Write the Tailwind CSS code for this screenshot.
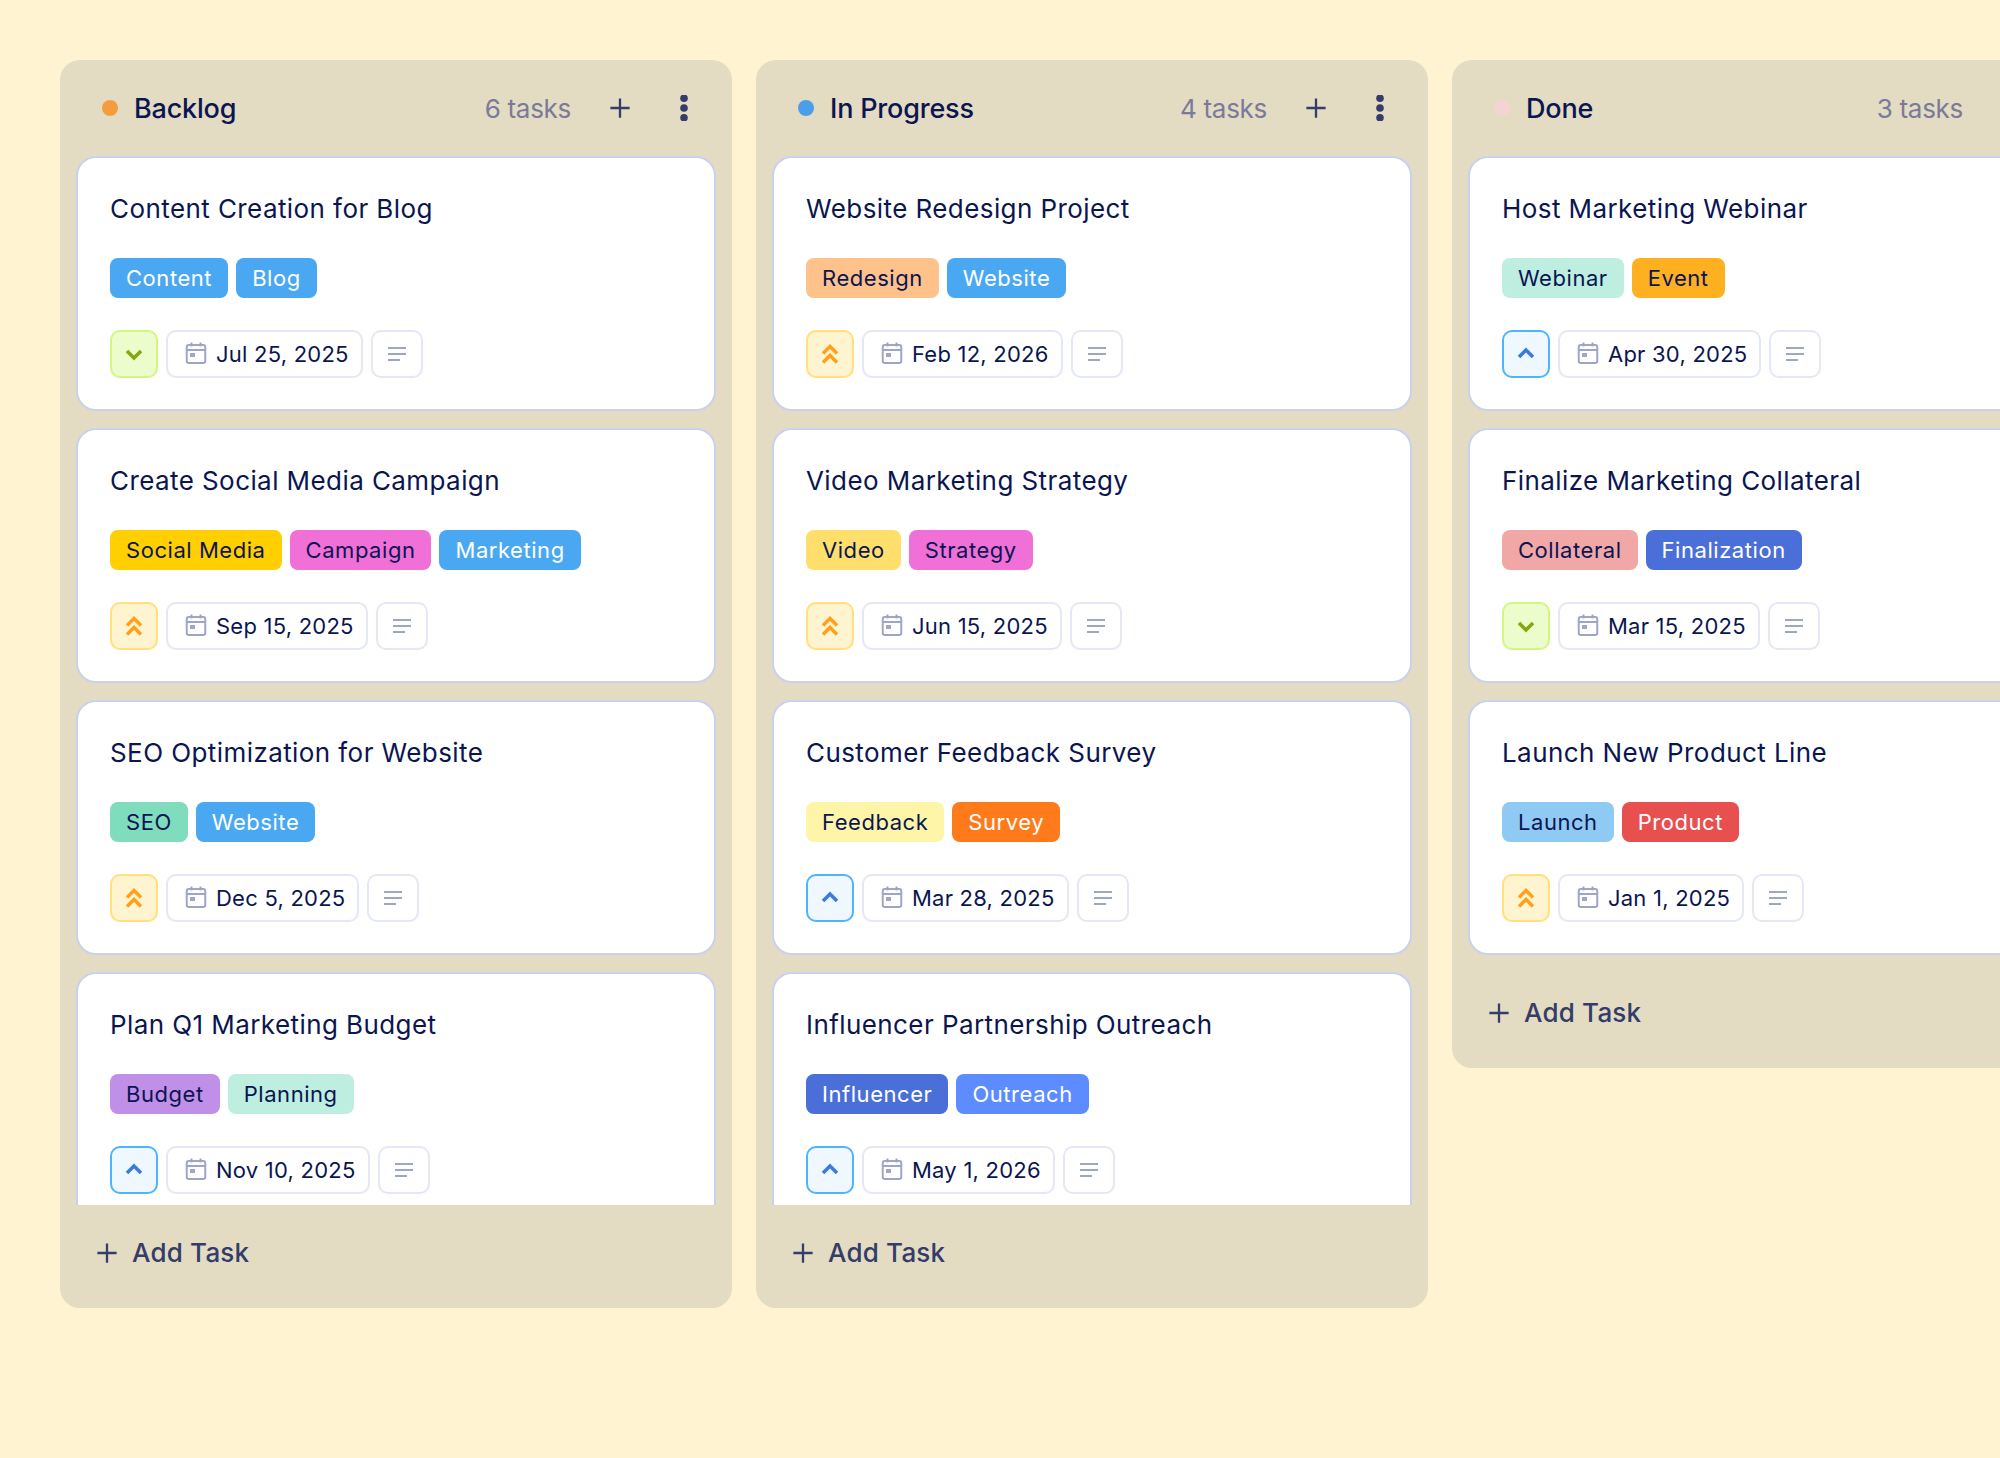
<!DOCTYPE html>
<html lang="en">
<head>
<meta charset="utf-8">
<title>Kanban</title>
<script src="https://cdn.jsdelivr.net/npm/@tailwindcss/browser@4"></script>
</head>
<body class="bg-[#fff3d1] font-['Inter','Noto_Sans',sans-serif] text-[#0a1551] w-[2000px] h-[1458px] overflow-hidden">
<svg class="hidden">
<symbol id="cal" viewBox="0 0 24 24"><rect x="2.75" y="3" width="18.500" height="18" rx="2" fill="none" stroke="currentColor" stroke-width="2"/><path d="M3 8h18M7.500 .5v4M16.500 .5v4" fill="none" stroke="currentColor" stroke-width="2"/><rect x="6" y="11" width="5" height="4" fill="currentColor"/></symbol>
<symbol id="note" viewBox="0 0 24 24"><path d="M3 6h18M3 12h18M3 18h12" fill="none" stroke="currentColor" stroke-width="2"/></symbol>
<symbol id="low" viewBox="0 0 24 24"><path d="M5 9l7 7 7-7" fill="none" stroke="currentColor" stroke-width="3.500"/></symbol>
<symbol id="med" viewBox="0 0 24 24"><path d="M5 15l7-7 7 7" fill="none" stroke="currentColor" stroke-width="3.500"/></symbol>
<symbol id="high" viewBox="0 0 24 24"><path d="M5 11.500l7-7 7 7M5 20.500l7-7 7 7" fill="none" stroke="currentColor" stroke-width="3.500"/></symbol>
<symbol id="plus" viewBox="0 0 24 24"><path d="M12 1.500v21M1.500 12h21" fill="none" stroke="currentColor" stroke-width="2.500"/></symbol>
<symbol id="dots" viewBox="0 0 24 24"><circle cx="12" cy="3" r="3.500" fill="currentColor"/><circle cx="12" cy="12" r="3.500" fill="currentColor"/><circle cx="12" cy="21" r="3.500" fill="currentColor"/></symbol>
</svg>
<main class="flex items-start gap-6 pl-[60px] pt-[60px]">

<section class="w-[672px] h-[1248px] shrink-0 flex flex-col bg-[#e3dbc2] rounded-[20px]">
  <header class="h-[96px] shrink-0 flex items-center pl-[42px] pr-[28px]">
    <span class="w-4 h-4 rounded-full bg-[#f49d3f]"></span>
    <h2 class="ml-4 pt-0.5 text-[27px] font-[550] tracking-[-0.2px]">Backlog</h2>
    <span class="ml-auto text-[26px] text-[#7a7a9a] tracking-[-0.3px]">6 tasks</span>
    <button class="ml-[29px] w-10 h-10 flex items-center justify-center text-[#343c6a]"><svg class="w-[22px] h-[22px]"><use href="#plus"/></svg></button>
    <button class="ml-6 w-10 h-10 flex items-center justify-center text-[#343c6a]"><svg class="w-[26px] h-[26px]"><use href="#dots"/></svg></button>
  </header>
  <div class="flex-1 overflow-hidden px-4 flex flex-col gap-[17px]">
    <article class="h-[255px] shrink-0 bg-white border-2 border-[#c9d1ee] rounded-[20px] px-8 pt-[31px]">
      <h3 class="h-10 leading-10 text-[26px] tracking-[0.42px] font-normal">Content Creation for Blog</h3>
      <div class="mt-[29px] flex gap-2 text-[22px] tracking-[0.55px]"><span class="h-10 leading-10 px-4 rounded-lg bg-[#4aa8f2] text-white">Content</span><span class="h-10 leading-10 px-4 rounded-lg bg-[#4aa8f2] text-white">Blog</span></div>
      <div class="mt-8 flex gap-2 text-[22px] tracking-[0.23px]">
        <span class="w-12 h-12 flex items-center justify-center rounded-[10px] border-2 border-[#d3f67f] bg-[#ecfccb] text-[#84a60e]"><svg class="w-6 h-6"><use href="#low"/></svg></span>
        <span class="h-12 flex items-center gap-2 pl-4 pr-3 rounded-[10px] border-2 border-[#e3e7f6]"><svg class="w-6 h-6 text-[#9da5cb]"><use href="#cal"/></svg>Jul 25, 2025</span>
        <span class="w-[52px] h-12 flex items-center justify-center rounded-[10px] border-2 border-[#e3e7f6] text-[#9da5cb]"><svg class="w-6 h-6"><use href="#note"/></svg></span>
      </div>
    </article>
    <article class="h-[255px] shrink-0 bg-white border-2 border-[#c9d1ee] rounded-[20px] px-8 pt-[31px]">
      <h3 class="h-10 leading-10 text-[26px] tracking-[0.42px] font-normal">Create Social Media Campaign</h3>
      <div class="mt-[29px] flex gap-2 text-[22px] tracking-[0.55px]"><span class="h-10 leading-10 px-4 rounded-lg bg-[#ffcf00]">Social Media</span><span class="h-10 leading-10 px-4 rounded-lg bg-[#f170d8]">Campaign</span><span class="h-10 leading-10 px-4 rounded-lg bg-[#4aa8f2] text-white">Marketing</span></div>
      <div class="mt-8 flex gap-2 text-[22px] tracking-[0.23px]">
        <span class="w-12 h-12 flex items-center justify-center rounded-[10px] border-2 border-[#ffe07a] bg-[#fff4d0] text-[#ff9f1a]"><svg class="w-6 h-6"><use href="#high"/></svg></span>
        <span class="h-12 flex items-center gap-2 pl-4 pr-3 rounded-[10px] border-2 border-[#e3e7f6]"><svg class="w-6 h-6 text-[#9da5cb]"><use href="#cal"/></svg>Sep 15, 2025</span>
        <span class="w-[52px] h-12 flex items-center justify-center rounded-[10px] border-2 border-[#e3e7f6] text-[#9da5cb]"><svg class="w-6 h-6"><use href="#note"/></svg></span>
      </div>
    </article>
    <article class="h-[255px] shrink-0 bg-white border-2 border-[#c9d1ee] rounded-[20px] px-8 pt-[31px]">
      <h3 class="h-10 leading-10 text-[26px] tracking-[0.42px] font-normal">SEO Optimization for Website</h3>
      <div class="mt-[29px] flex gap-2 text-[22px] tracking-[0.55px]"><span class="h-10 leading-10 px-4 rounded-lg bg-[#7fdcbc]">SEO</span><span class="h-10 leading-10 px-4 rounded-lg bg-[#4aa8f2] text-white">Website</span></div>
      <div class="mt-8 flex gap-2 text-[22px] tracking-[0.23px]">
        <span class="w-12 h-12 flex items-center justify-center rounded-[10px] border-2 border-[#ffe07a] bg-[#fff4d0] text-[#ff9f1a]"><svg class="w-6 h-6"><use href="#high"/></svg></span>
        <span class="h-12 flex items-center gap-2 pl-4 pr-3 rounded-[10px] border-2 border-[#e3e7f6]"><svg class="w-6 h-6 text-[#9da5cb]"><use href="#cal"/></svg>Dec 5, 2025</span>
        <span class="w-[52px] h-12 flex items-center justify-center rounded-[10px] border-2 border-[#e3e7f6] text-[#9da5cb]"><svg class="w-6 h-6"><use href="#note"/></svg></span>
      </div>
    </article>
    <article class="h-[255px] shrink-0 bg-white border-2 border-[#c9d1ee] rounded-[20px] px-8 pt-[31px]">
      <h3 class="h-10 leading-10 text-[26px] tracking-[0.42px] font-normal">Plan Q1 Marketing Budget</h3>
      <div class="mt-[29px] flex gap-2 text-[22px] tracking-[0.55px]"><span class="h-10 leading-10 px-4 rounded-lg bg-[#c08fe8]">Budget</span><span class="h-10 leading-10 px-4 rounded-lg bg-[#bdeee0]">Planning</span></div>
      <div class="mt-8 flex gap-2 text-[22px] tracking-[0.23px]">
        <span class="w-12 h-12 flex items-center justify-center rounded-[10px] border-2 border-[#4db5ff] bg-[#eff7ff] text-[#3b7be0]"><svg class="w-6 h-6"><use href="#med"/></svg></span>
        <span class="h-12 flex items-center gap-2 pl-4 pr-3 rounded-[10px] border-2 border-[#e3e7f6]"><svg class="w-6 h-6 text-[#9da5cb]"><use href="#cal"/></svg>Nov 10, 2025</span>
        <span class="w-[52px] h-12 flex items-center justify-center rounded-[10px] border-2 border-[#e3e7f6] text-[#9da5cb]"><svg class="w-6 h-6"><use href="#note"/></svg></span>
      </div>
    </article>
  </div>
  <footer class="h-[103px] shrink-0 flex items-center pb-2 pl-[36px] gap-[14px] text-[26px] font-medium text-[#343c6a] tracking-[0.2px]"><svg class="w-[22px] h-[22px]"><use href="#plus"/></svg>Add Task</footer>
</section>

<section class="w-[672px] h-[1248px] shrink-0 flex flex-col bg-[#e3dbc2] rounded-[20px]">
  <header class="h-[96px] shrink-0 flex items-center pl-[42px] pr-[28px]">
    <span class="w-4 h-4 rounded-full bg-[#4a9fe8]"></span>
    <h2 class="ml-4 pt-0.5 text-[27px] font-[550] tracking-[-0.2px]">In Progress</h2>
    <span class="ml-auto text-[26px] text-[#7a7a9a] tracking-[-0.3px]">4 tasks</span>
    <button class="ml-[29px] w-10 h-10 flex items-center justify-center text-[#343c6a]"><svg class="w-[22px] h-[22px]"><use href="#plus"/></svg></button>
    <button class="ml-6 w-10 h-10 flex items-center justify-center text-[#343c6a]"><svg class="w-[26px] h-[26px]"><use href="#dots"/></svg></button>
  </header>
  <div class="flex-1 overflow-hidden px-4 flex flex-col gap-[17px]">
    <article class="h-[255px] shrink-0 bg-white border-2 border-[#c9d1ee] rounded-[20px] px-8 pt-[31px]">
      <h3 class="h-10 leading-10 text-[26px] tracking-[0.42px] font-normal">Website Redesign Project</h3>
      <div class="mt-[29px] flex gap-2 text-[22px] tracking-[0.55px]"><span class="h-10 leading-10 px-4 rounded-lg bg-[#ffc28a]">Redesign</span><span class="h-10 leading-10 px-4 rounded-lg bg-[#4aa8f2] text-white">Website</span></div>
      <div class="mt-8 flex gap-2 text-[22px] tracking-[0.23px]">
        <span class="w-12 h-12 flex items-center justify-center rounded-[10px] border-2 border-[#ffe07a] bg-[#fff4d0] text-[#ff9f1a]"><svg class="w-6 h-6"><use href="#high"/></svg></span>
        <span class="h-12 flex items-center gap-2 pl-4 pr-3 rounded-[10px] border-2 border-[#e3e7f6]"><svg class="w-6 h-6 text-[#9da5cb]"><use href="#cal"/></svg>Feb 12, 2026</span>
        <span class="w-[52px] h-12 flex items-center justify-center rounded-[10px] border-2 border-[#e3e7f6] text-[#9da5cb]"><svg class="w-6 h-6"><use href="#note"/></svg></span>
      </div>
    </article>
    <article class="h-[255px] shrink-0 bg-white border-2 border-[#c9d1ee] rounded-[20px] px-8 pt-[31px]">
      <h3 class="h-10 leading-10 text-[26px] tracking-[0.42px] font-normal">Video Marketing Strategy</h3>
      <div class="mt-[29px] flex gap-2 text-[22px] tracking-[0.55px]"><span class="h-10 leading-10 px-4 rounded-lg bg-[#ffdf6b]">Video</span><span class="h-10 leading-10 px-4 rounded-lg bg-[#f170d8]">Strategy</span></div>
      <div class="mt-8 flex gap-2 text-[22px] tracking-[0.23px]">
        <span class="w-12 h-12 flex items-center justify-center rounded-[10px] border-2 border-[#ffe07a] bg-[#fff4d0] text-[#ff9f1a]"><svg class="w-6 h-6"><use href="#high"/></svg></span>
        <span class="h-12 flex items-center gap-2 pl-4 pr-3 rounded-[10px] border-2 border-[#e3e7f6]"><svg class="w-6 h-6 text-[#9da5cb]"><use href="#cal"/></svg>Jun 15, 2025</span>
        <span class="w-[52px] h-12 flex items-center justify-center rounded-[10px] border-2 border-[#e3e7f6] text-[#9da5cb]"><svg class="w-6 h-6"><use href="#note"/></svg></span>
      </div>
    </article>
    <article class="h-[255px] shrink-0 bg-white border-2 border-[#c9d1ee] rounded-[20px] px-8 pt-[31px]">
      <h3 class="h-10 leading-10 text-[26px] tracking-[0.42px] font-normal">Customer Feedback Survey</h3>
      <div class="mt-[29px] flex gap-2 text-[22px] tracking-[0.55px]"><span class="h-10 leading-10 px-4 rounded-lg bg-[#fff5a8]">Feedback</span><span class="h-10 leading-10 px-4 rounded-lg bg-[#ff7a1a] text-white">Survey</span></div>
      <div class="mt-8 flex gap-2 text-[22px] tracking-[0.23px]">
        <span class="w-12 h-12 flex items-center justify-center rounded-[10px] border-2 border-[#4db5ff] bg-[#eff7ff] text-[#3b7be0]"><svg class="w-6 h-6"><use href="#med"/></svg></span>
        <span class="h-12 flex items-center gap-2 pl-4 pr-3 rounded-[10px] border-2 border-[#e3e7f6]"><svg class="w-6 h-6 text-[#9da5cb]"><use href="#cal"/></svg>Mar 28, 2025</span>
        <span class="w-[52px] h-12 flex items-center justify-center rounded-[10px] border-2 border-[#e3e7f6] text-[#9da5cb]"><svg class="w-6 h-6"><use href="#note"/></svg></span>
      </div>
    </article>
    <article class="h-[255px] shrink-0 bg-white border-2 border-[#c9d1ee] rounded-[20px] px-8 pt-[31px]">
      <h3 class="h-10 leading-10 text-[26px] tracking-[0.42px] font-normal">Influencer Partnership Outreach</h3>
      <div class="mt-[29px] flex gap-2 text-[22px] tracking-[0.55px]"><span class="h-10 leading-10 px-4 rounded-lg bg-[#4a6fd8] text-white">Influencer</span><span class="h-10 leading-10 px-4 rounded-lg bg-[#5c8cff] text-white">Outreach</span></div>
      <div class="mt-8 flex gap-2 text-[22px] tracking-[0.23px]">
        <span class="w-12 h-12 flex items-center justify-center rounded-[10px] border-2 border-[#4db5ff] bg-[#eff7ff] text-[#3b7be0]"><svg class="w-6 h-6"><use href="#med"/></svg></span>
        <span class="h-12 flex items-center gap-2 pl-4 pr-3 rounded-[10px] border-2 border-[#e3e7f6]"><svg class="w-6 h-6 text-[#9da5cb]"><use href="#cal"/></svg>May 1, 2026</span>
        <span class="w-[52px] h-12 flex items-center justify-center rounded-[10px] border-2 border-[#e3e7f6] text-[#9da5cb]"><svg class="w-6 h-6"><use href="#note"/></svg></span>
      </div>
    </article>
  </div>
  <footer class="h-[103px] shrink-0 flex items-center pb-2 pl-[36px] gap-[14px] text-[26px] font-medium text-[#343c6a] tracking-[0.2px]"><svg class="w-[22px] h-[22px]"><use href="#plus"/></svg>Add Task</footer>
</section>

<section class="w-[672px] shrink-0 flex flex-col bg-[#e3dbc2] rounded-[20px]">
  <header class="h-[96px] shrink-0 flex items-center pl-[42px] pr-[28px]">
    <span class="w-4 h-4 rounded-full bg-[#f5d3d3]"></span>
    <h2 class="ml-4 pt-0.5 text-[27px] font-[550] tracking-[-0.2px]">Done</h2>
    <span class="ml-auto text-[26px] text-[#7a7a9a] tracking-[-0.3px]">3 tasks</span>
    <button class="ml-[29px] w-10 h-10 flex items-center justify-center text-[#343c6a]"><svg class="w-[22px] h-[22px]"><use href="#plus"/></svg></button>
    <button class="ml-6 w-10 h-10 flex items-center justify-center text-[#343c6a]"><svg class="w-[26px] h-[26px]"><use href="#dots"/></svg></button>
  </header>
  <div class="px-4 pb-[10px] flex flex-col gap-[17px]">
    <article class="h-[255px] shrink-0 bg-white border-2 border-[#c9d1ee] rounded-[20px] px-8 pt-[31px]">
      <h3 class="h-10 leading-10 text-[26px] tracking-[0.42px] font-normal">Host Marketing Webinar</h3>
      <div class="mt-[29px] flex gap-2 text-[22px] tracking-[0.55px]"><span class="h-10 leading-10 px-4 rounded-lg bg-[#bdeee0]">Webinar</span><span class="h-10 leading-10 px-4 rounded-lg bg-[#ffb020]">Event</span></div>
      <div class="mt-8 flex gap-2 text-[22px] tracking-[0.23px]">
        <span class="w-12 h-12 flex items-center justify-center rounded-[10px] border-2 border-[#4db5ff] bg-[#eff7ff] text-[#3b7be0]"><svg class="w-6 h-6"><use href="#med"/></svg></span>
        <span class="h-12 flex items-center gap-2 pl-4 pr-3 rounded-[10px] border-2 border-[#e3e7f6]"><svg class="w-6 h-6 text-[#9da5cb]"><use href="#cal"/></svg>Apr 30, 2025</span>
        <span class="w-[52px] h-12 flex items-center justify-center rounded-[10px] border-2 border-[#e3e7f6] text-[#9da5cb]"><svg class="w-6 h-6"><use href="#note"/></svg></span>
      </div>
    </article>
    <article class="h-[255px] shrink-0 bg-white border-2 border-[#c9d1ee] rounded-[20px] px-8 pt-[31px]">
      <h3 class="h-10 leading-10 text-[26px] tracking-[0.42px] font-normal">Finalize Marketing Collateral</h3>
      <div class="mt-[29px] flex gap-2 text-[22px] tracking-[0.55px]"><span class="h-10 leading-10 px-4 rounded-lg bg-[#f2a7a7]">Collateral</span><span class="h-10 leading-10 px-4 rounded-lg bg-[#4a6fd8] text-white">Finalization</span></div>
      <div class="mt-8 flex gap-2 text-[22px] tracking-[0.23px]">
        <span class="w-12 h-12 flex items-center justify-center rounded-[10px] border-2 border-[#d3f67f] bg-[#ecfccb] text-[#84a60e]"><svg class="w-6 h-6"><use href="#low"/></svg></span>
        <span class="h-12 flex items-center gap-2 pl-4 pr-3 rounded-[10px] border-2 border-[#e3e7f6]"><svg class="w-6 h-6 text-[#9da5cb]"><use href="#cal"/></svg>Mar 15, 2025</span>
        <span class="w-[52px] h-12 flex items-center justify-center rounded-[10px] border-2 border-[#e3e7f6] text-[#9da5cb]"><svg class="w-6 h-6"><use href="#note"/></svg></span>
      </div>
    </article>
    <article class="h-[255px] shrink-0 bg-white border-2 border-[#c9d1ee] rounded-[20px] px-8 pt-[31px]">
      <h3 class="h-10 leading-10 text-[26px] tracking-[0.42px] font-normal">Launch New Product Line</h3>
      <div class="mt-[29px] flex gap-2 text-[22px] tracking-[0.55px]"><span class="h-10 leading-10 px-4 rounded-lg bg-[#8fcaf5]">Launch</span><span class="h-10 leading-10 px-4 rounded-lg bg-[#e85050] text-white">Product</span></div>
      <div class="mt-8 flex gap-2 text-[22px] tracking-[0.23px]">
        <span class="w-12 h-12 flex items-center justify-center rounded-[10px] border-2 border-[#ffe07a] bg-[#fff4d0] text-[#ff9f1a]"><svg class="w-6 h-6"><use href="#high"/></svg></span>
        <span class="h-12 flex items-center gap-2 pl-4 pr-3 rounded-[10px] border-2 border-[#e3e7f6]"><svg class="w-6 h-6 text-[#9da5cb]"><use href="#cal"/></svg>Jan 1, 2025</span>
        <span class="w-[52px] h-12 flex items-center justify-center rounded-[10px] border-2 border-[#e3e7f6] text-[#9da5cb]"><svg class="w-6 h-6"><use href="#note"/></svg></span>
      </div>
    </article>
  </div>
  <footer class="h-[103px] shrink-0 flex items-center pb-2 pl-[36px] gap-[14px] text-[26px] font-medium text-[#343c6a] tracking-[0.2px]"><svg class="w-[22px] h-[22px]"><use href="#plus"/></svg>Add Task</footer>
</section>
</main>
</body>
</html>
